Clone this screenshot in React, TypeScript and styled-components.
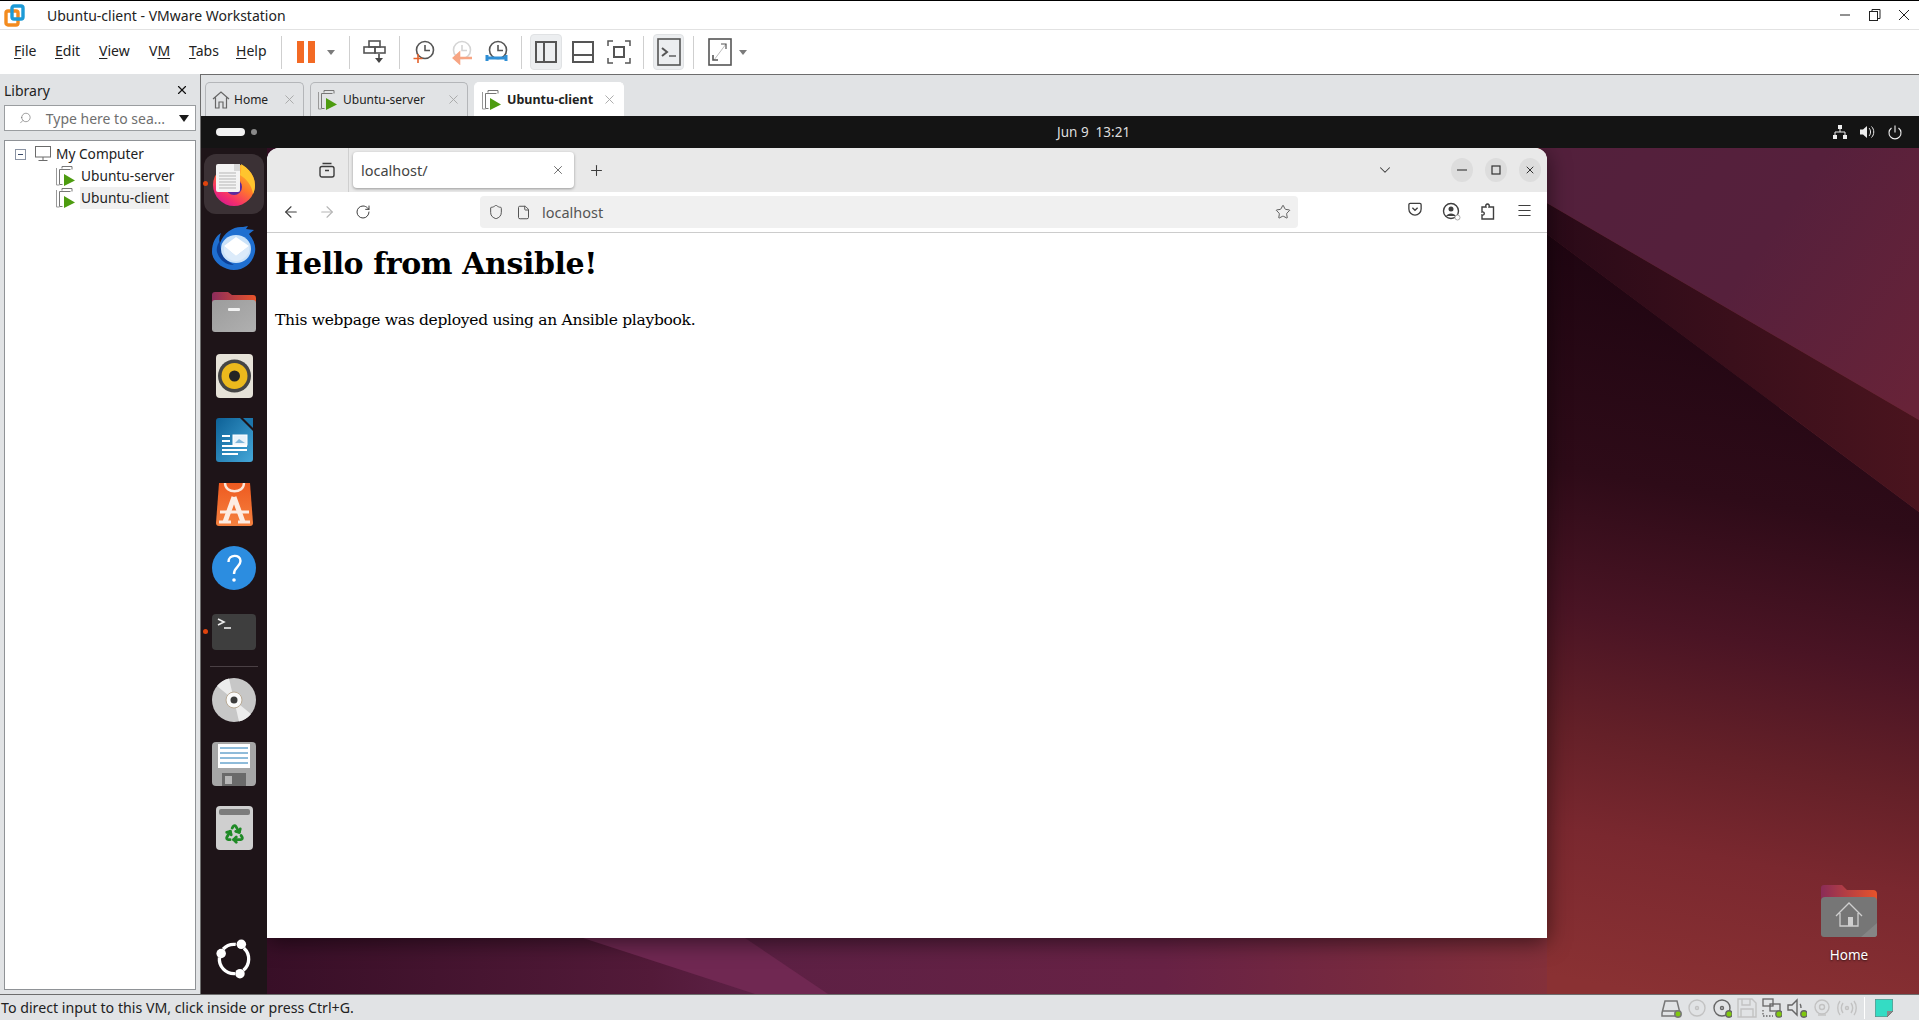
import React from "react";
import styled, { createGlobalStyle } from "styled-components";
import {
  ArrowLeft,
  ArrowRight,
  ChevronDown,
  File,
  Menu,
  Plus,
  Recycle,
  RotateCw,
  Search,
  Shield,
  Star,
  X,
} from "lucide-react";

const GlobalStyle = createGlobalStyle`
  html, body { margin: 0; padding: 0; background: #e1e3e5; overflow: hidden; }
  body { font-family: "Noto Sans", "Open Sans", sans-serif; }
`;

const Shell = styled.div`
  width: 1919px;
  height: 1020px;
  display: flex;
  flex-direction: column;
  background: #e1e3e5;
  color: #1a1a1a;
`;

const TitleBar = styled.div`
  height: 30px;
  box-sizing: border-box;
  display: flex;
  align-items: center;
  background: #fff;
  border-top: 1px solid #000;
  border-bottom: 1px solid #e2e2e2;
  padding-left: 4px;
`;

const TitleText = styled.span`
  margin-left: 21px;
  font-size: 14px;
  color: #222;
  flex: 1;
`;

const WinControl = styled.div`
  width: 29.5px;
  display: flex;
  justify-content: center;
`;

const ToolBar = styled.div`
  height: 44px;
  display: flex;
  align-items: center;
  background: #fff;
`;

const MenuItem = styled.div<{ $w: number }>`
  width: ${(p) => p.$w}px;
  font-size: 14px;
  color: #222;
  u { text-underline-offset: 2px; }
`;

const MenuRow = styled.div`
  display: flex;
  padding-left: 14px;
  margin-bottom: 3px;
`;

const Sep = styled.div`
  width: 1px;
  height: 33px;
  background: #cfcfcf;
`;

const ToolCell = styled.div<{ $w: number; $active?: boolean; $gap?: number }>`
  width: ${(p) => p.$w}px;
  height: 36px;
  box-sizing: border-box;
  display: flex;
  align-items: center;
  justify-content: center;
  gap: ${(p) => p.$gap ?? 11}px;
  border-radius: 4px;
  background: ${(p) => (p.$active ? "#eceef0" : "transparent")};
  border: 1px solid ${(p) => (p.$active ? "#e0e2e4" : "transparent")};
`;

const ToolPad = styled.div<{ $w: number }>`
  width: ${(p) => p.$w}px;
`;

const Caret = styled.div`
  width: 0;
  height: 0;
  border-left: 4.5px solid transparent;
  border-right: 4.5px solid transparent;
  border-top: 5px solid #7b7b7b;
`;

const Main = styled.div`
  flex: 1;
  display: flex;
  min-height: 0;
`;

const Library = styled.div`
  width: 200px;
  box-sizing: border-box;
  padding: 0 4px 4px;
  display: flex;
  flex-direction: column;
`;

const LibraryHead = styled.div`
  height: 31px;
  box-sizing: border-box;
  padding: 1px 7px 0 0;
  display: flex;
  align-items: center;
  justify-content: space-between;
  font-size: 14px;
  color: #222;
`;

const SearchBox = styled.div`
  height: 26px;
  box-sizing: border-box;
  border: 1px solid #9a9da0;
  background: #fff;
  display: flex;
  align-items: center;
  padding-left: 14px;
  font-size: 14px;
  color: #6f6f6f;
  gap: 14px;
`;

const SearchText = styled.span`
  flex: 1;
  white-space: nowrap;
`;

const SearchGlyph = styled(Search)`
  transform: scaleX(-1);
`;

const BlackCaret = styled.div`
  width: 0;
  height: 0;
  margin-right: 6px;
  border-left: 5.5px solid transparent;
  border-right: 5.5px solid transparent;
  border-top: 7px solid #1a1a1a;
`;

const Tree = styled.div`
  flex: 1;
  margin-top: 9px;
  box-sizing: border-box;
  border: 1px solid #8f9296;
  background: #fff;
  padding-top: 2px;
`;

const TreeRow = styled.div<{ $indent: number }>`
  height: 22px;
  display: flex;
  align-items: center;
  padding-left: ${(p) => p.$indent}px;
  font-size: 13.7px;
  color: #222;
`;

const TreeLabel = styled.span<{ $selected?: boolean }>`
  margin-left: 3px;
  padding: 0 1px;
  line-height: 22px;
  background: ${(p) => (p.$selected ? "#f0f0f0" : "transparent")};
`;

const ExpandBox = styled.div`
  width: 9px;
  height: 9px;
  margin-right: 8px;
  border: 1px solid #8a93a3;
  display: flex;
  align-items: center;
  justify-content: center;
  &::after {
    content: "";
    width: 5px;
    height: 1px;
    background: #3a4a6a;
  }
`;

const VmArea = styled.div`
  flex: 1;
  display: flex;
  flex-direction: column;
  border-left: 1px solid #6d6d6d;
  border-top: 1px solid #6d6d6d;
  min-width: 0;
`;

const TabStrip = styled.div`
  height: 41px;
  display: flex;
  align-items: flex-end;
  gap: 6px;
  padding-left: 4px;
  background: #e1e3e5;
`;

const VmTab = styled.div<{ $w: number; $active?: boolean }>`
  width: ${(p) => p.$w}px;
  height: 34px;
  box-sizing: border-box;
  display: flex;
  align-items: center;
  padding-left: 6px;
  border: 1px solid ${(p) => (p.$active ? "#fff" : "#b4b6b9")};
  border-bottom: none;
  border-radius: 5px 5px 0 0;
  background: ${(p) => (p.$active ? "#fff" : "#e1e3e5")};
  font-size: ${(p) => (p.$active ? 12.5 : 12)}px;
  font-weight: ${(p) => (p.$active ? 700 : 400)};
  color: #222;
`;

const VmTabLabel = styled.span`
  margin-left: 4px;
  flex: 1;
  white-space: nowrap;
`;

const VmTabClose = styled.div`
  margin-right: 6px;
  display: flex;
  color: #a8a8a8;
`;

const GuestBar = styled.div`
  height: 32px;
  display: flex;
  align-items: center;
  background: #141414;
  color: #dedede;
  font-size: 13.5px;
  padding: 0 17px 0 15px;
`;

const ActivityPill = styled.div`
  width: 29px;
  height: 8px;
  border-radius: 4px;
  background: #f2f2f2;
`;

const ActivityDot = styled.div`
  width: 6px;
  height: 6px;
  margin-left: 6px;
  border-radius: 50%;
  background: #8a8a8a;
`;

const Clock = styled.span`
  margin-left: 800px;
  white-space: pre;
  flex: 1;
`;

const TrayIcons = styled.div`
  display: flex;
  align-items: center;
  gap: 13px;
`;

const GuestBody = styled.div`
  flex: 1;
  display: flex;
  min-height: 0;
`;

const Dock = styled.div`
  width: 66px;
  flex: none;
  display: flex;
  flex-direction: column;
  align-items: center;
  box-sizing: border-box;
  padding: 4px 0 3px;
  background: #1e1418;
`;

const DockCell = styled.div<{ $active?: boolean; $running?: boolean }>`
  position: relative;
  width: 60px;
  height: 60px;
  margin: 2px 0;
  display: flex;
  align-items: center;
  justify-content: center;
  border-radius: 12px;
  background: ${(p) => (p.$active ? "#3b3135" : "transparent")};
  &::before {
    content: "";
    display: ${(p) => (p.$running ? "block" : "none")};
    position: absolute;
    left: -1px;
    top: 27px;
    width: 5px;
    height: 5px;
    border-radius: 50%;
    background: #e0440e;
  }
`;

const DockDivider = styled.div`
  width: 48px;
  height: 1px;
  margin: 2px 0 1px;
  background: #4a4044;
`;

const DockSpacer = styled.div`
  flex: 1;
`;

const Desktop = styled.div`
  position: relative;
  flex: 1;
  overflow: hidden;
`;

const Wallpaper = styled.svg`
  position: absolute;
  inset: 0;
  width: 100%;
  height: 100%;
`;

const BrowserWindow = styled.div`
  position: absolute;
  left: 0;
  top: 0;
  width: 1280px;
  height: 790px;
  display: flex;
  flex-direction: column;
  background: #fff;
  border-radius: 12px 12px 0 0;
  overflow: hidden;
  box-shadow: 0 4px 22px rgba(0, 0, 0, 0.55);
`;

const BrowserTabs = styled.div`
  height: 44px;
  flex: none;
  display: flex;
  align-items: center;
  background: #e9e9e9;
  color: #3c3c3c;
`;

const ViewButton = styled.div`
  width: 82px;
  height: 44px;
  box-sizing: border-box;
  padding-left: 52px;
  display: flex;
  align-items: center;
  border-right: 1px solid #cfcfcf;
`;

const BrowserTab = styled.div`
  width: 221px;
  height: 36px;
  margin-left: 4px;
  box-sizing: border-box;
  display: flex;
  align-items: center;
  justify-content: space-between;
  padding: 0 9px 0 8px;
  background: #fff;
  border-radius: 4px;
  box-shadow: 0 1px 3px rgba(0, 0, 0, 0.35);
  font-size: 14.5px;
  color: #444;
`;

const NewTab = styled.div`
  margin-left: 14px;
  display: flex;
  flex: 1;
`;

const RoundControl = styled.div<{ $last?: boolean }>`
  width: 22px;
  height: 24px;
  margin-left: 12px;
  margin-right: ${(p) => (p.$last ? 6 : 0)}px;
  border-radius: 50%;
  background: #dddddd;
  display: flex;
  align-items: center;
  justify-content: center;
`;

const TabChevron = styled.div`
  margin-right: 45px;
  display: flex;
`;

const NavBar = styled.div`
  height: 41px;
  flex: none;
  box-sizing: border-box;
  display: flex;
  align-items: center;
  border-bottom: 1px solid #cccccc;
  color: #3f3f3f;
  padding-left: 6px;
`;

const NavButton = styled.div<{ $muted?: boolean }>`
  width: 36px;
  display: flex;
  justify-content: center;
  color: ${(p) => (p.$muted ? "#b5b5b5" : "#3f3f3f")};
`;

const UrlBar = styled.div`
  width: 818px;
  height: 32px;
  margin-left: 99px;
  box-sizing: border-box;
  display: flex;
  align-items: center;
  padding: 0 7px 0 8px;
  gap: 12px;
  border-radius: 4px;
  background: #f0f0f0;
  font-size: 14.5px;
  color: #555;
`;

const UrlText = styled.span`
  flex: 1;
  margin-left: -1px;
`;

const NavTools = styled.div`
  display: flex;
  margin-left: 99px;
`;

const NavTool = styled.div`
  width: 36.5px;
  display: flex;
  justify-content: center;
`;

const Page = styled.div`
  flex: 1;
  padding: 0 8px;
  color: #000;
  font-family: "DejaVu Serif", "Liberation Serif", serif;
`;

const Heading = styled.h1`
  margin: 11px 0 0;
  font-size: 30px;
  letter-spacing: -0.4px;
  line-height: 40px;
  font-weight: 700;
`;

const Paragraph = styled.p`
  margin: 24px 0 0;
  font-size: 15.5px;
  letter-spacing: -0.3px;
  line-height: 24px;
`;

const HomeIcon = styled.div`
  position: absolute;
  left: 1527px;
  top: 737px;
  width: 110px;
  display: flex;
  flex-direction: column;
  align-items: center;
  color: #fff;
  font-size: 13.5px;
  text-shadow: 0 1px 2px rgba(0, 0, 0, 0.6);
`;

const HomeLabel = styled.span`
  margin-top: 9px;
`;

const StatusBar = styled.div`
  height: 26px;
  flex: none;
  box-sizing: border-box;
  display: flex;
  align-items: center;
  border-top: 1px solid #6d6d6d;
  background: #e1e3e5;
  font-size: 14.2px;
  padding-left: 1px;
  color: #222;
`;

const StatusText = styled.span`
  flex: 1;
`;

const StatusIcons = styled.div`
  display: flex;
  align-items: center;
  padding-right: 26px;
`;

const StatusCell = styled.div`
  width: 25px;
  display: flex;
  justify-content: center;
`;

const StatusSep = styled.div`
  width: 1px;
  height: 22px;
  margin: 0 10px 0 5px;
  background: #fff;
`;

const VmwareLogo = () => (
  <svg width="22" height="26" viewBox="0 0 22 26">
    <rect x="2" y="9" width="12" height="14" rx="2" fill="none" stroke="#f38b1e" strokeWidth="3.4" />
    <rect x="8" y="4" width="11" height="13" rx="2" fill="none" stroke="#1c9ad6" strokeWidth="3.4" />
  </svg>
);

const Minimize = () => (
  <svg width="12" height="12"><path d="M1 6h10" stroke="#222" /></svg>
);
const Restore = () => (
  <svg width="14" height="14" fill="none" stroke="#222">
    <rect x="1.5" y="3.5" width="8" height="9" />
    <path d="M4 3.5V1.5h8v9h-2.5" />
  </svg>
);
const CloseX = () => (
  <svg width="12" height="12" stroke="#222"><path d="M1 1l10 10M11 1L1 11" /></svg>
);

const PauseIcon = () => (
  <svg width="18" height="22">
    <rect width="7" height="22" fill="#f36a24" />
    <rect x="11" width="7" height="22" fill="#f36a24" />
  </svg>
);

const SendKeysIcon = () => (
  <svg width="24" height="24" fill="none" stroke="#555" strokeWidth="1.6">
    <rect x="6" y="1" width="11" height="6" />
    <rect x="1" y="7" width="11" height="6" />
    <rect x="12" y="7" width="10" height="6" />
    <path d="M16 14v5" stroke="#444" />
    <path d="M12 18h8l-4 5z" fill="#444" stroke="none" />
  </svg>
);

const SnapshotIcon = ({ kind }: { kind: "take" | "revert" | "manage" }) => {
  const faded = kind === "revert";
  return (
    <svg width="24" height="26" fill="none">
      <circle cx="13" cy="11" r="8.5" stroke={faded ? "#d4d4d4" : "#555"} strokeWidth="1.6" />
      <path d="M13 6v5.5h5" stroke={faded ? "#d4d4d4" : "#555"} strokeWidth="1.6" />
      {kind === "take" && <path d="M6 15v9M1.5 19.5h9" stroke="#e4632c" strokeWidth="1.6" />}
      {kind === "revert" && <path d="M23 19H6M10 14.5L5 19l5 4.5z" stroke="#f7a583" strokeWidth="2.6" />}
      {kind === "manage" && <path d="M2 19h19M2 16v6M21 16v6" stroke="#2f8fd6" strokeWidth="3" />}
    </svg>
  );
};

const PanelIcon = ({ kind }: { kind: "side" | "bottom" | "full" }) => (
  <svg width="24" height="24" fill="none" stroke="#555" strokeWidth="2">
    {kind === "side" && (
      <>
        <rect x="2" y="2" width="20" height="20" />
        <path d="M10 2v20" />
      </>
    )}
    {kind === "bottom" && (
      <>
        <rect x="2" y="2" width="20" height="20" />
        <path d="M2 15h20" />
      </>
    )}
    {kind === "full" && (
      <>
        <rect x="7" y="7" width="10" height="10" />
        <path d="M1 6V1h5M18 1h5v5M23 18v5h-5M6 23H1v-5" strokeWidth="1.5" />
      </>
    )}
  </svg>
);

const ConsoleIcon = () => (
  <svg width="24" height="28" fill="none" stroke="#555">
    <rect x="1" y="1" width="22" height="26" strokeWidth="1.6" />
    <path d="M5 10l5 4-5 4" strokeWidth="2" />
    <path d="M12 18h7" strokeWidth="1.4" />
  </svg>
);

const StretchIcon = () => (
  <svg width="24" height="28" fill="none" stroke="#555">
    <rect x="1" y="1" width="22" height="26" strokeWidth="1.6" />
    <path d="M6 22L18 6" stroke="#bcbcbc" />
    <path d="M13 6h5v5" strokeWidth="1.2" />
    <path d="M5 17v5h5" strokeWidth="1.6" />
  </svg>
);

const VmGlyph = () => (
  <svg width="22" height="22" fill="none">
    <path d="M7 3.5V1.5h10v3M4.5 4.5h11M4.5 4.5v15h3" stroke="#777" />
    <path d="M1.5 3v17h3" stroke="#999" />
    <path d="M9 9l11 6.5L9 21z" fill="#4d9c10" />
  </svg>
);

const MonitorGlyph = () => (
  <svg width="18" height="18" fill="none" stroke="#6b6b6b">
    <rect x="1.5" y="1.5" width="15" height="10.5" />
    <path d="M9 12v3M4.5 15.5h9" />
  </svg>
);

const HomeGlyph = () => (
  <svg width="18" height="20" fill="none" stroke="#666" strokeWidth="1.2">
    <path d="M1 9l8-7 8 7M3.5 7.5V18h3.5v-6h4v6h3.5V7.5" />
  </svg>
);

const FirefoxDock = () => (
  <svg width="48" height="48" viewBox="0 0 48 48">
    <defs>
      <linearGradient id="ffBody" x1="0.9" y1="0.1" x2="0.3" y2="1">
        <stop offset="0" stopColor="#ffc22f" />
        <stop offset="0.45" stopColor="#ff7a2a" />
        <stop offset="0.8" stopColor="#f5306a" />
        <stop offset="1" stopColor="#d81c8c" />
      </linearGradient>
    </defs>
    <circle cx="24" cy="25" r="21" fill="url(#ffBody)" />
    <path d="M31 4c5 3 13 9 14 21 0 4-1 7-2 9-1-8-6-15-13-19 1-4 2-7 1-11z" fill="#ffc52e" />
    <circle cx="24" cy="27" r="8" fill="#5b2a9e" />
    <rect x="6" y="4" width="24" height="28" rx="2" fill="#f4f4f4" />
    <path d="M24 4h6v7h-6z" fill="#d8d8d8" />
    <path d="M9 13h17M9 16h17M9 19h17M9 22h17M9 25h17M9 28h17" stroke="#b5b5b5" />
  </svg>
);

const ThunderbirdDock = () => (
  <svg width="48" height="48" viewBox="0 0 48 48">
    <path d="M2 28C2 18 6 12 11 9c-2 5-2 8-1 10C14 8 24 2 33 3l5-1-2 3 8 1-5 4c5 6 7 12 6 18-2 11-11 18-21 18S2 38 2 28z" fill="#1f6fd0" />
    <path d="M7 28c-1-4 1-9 3-11 0 8 2 18 14 24-9 0-15-6-17-13z" fill="#0c3f96" />
    <ellipse cx="26" cy="25" rx="15" ry="14" fill="#cbe2f8" />
    <path d="M14 22l12-9 13 9-13 10z" fill="#ffffff" />
    <path d="M14 22l12 10 13-10v6c-3 6-8 9-13 9s-10-3-12-9z" fill="#dcebfa" />
  </svg>
);

const FilesDock = () => (
  <svg width="48" height="48" viewBox="0 0 48 48">
    <defs>
      <linearGradient id="folderBack" x1="0" y1="0" x2="1" y2="0">
        <stop offset="0" stopColor="#8c2c5c" />
        <stop offset="1" stopColor="#e8542a" />
      </linearGradient>
      <linearGradient id="folderFront" x1="0" y1="0" x2="1" y2="1">
        <stop offset="0" stopColor="#9c9c9c" />
        <stop offset="1" stopColor="#b0b0b0" />
      </linearGradient>
    </defs>
    <path d="M2 7a3 3 0 013-3h13l4 3h21a3 3 0 013 3v10H2z" fill="url(#folderBack)" />
    <rect x="2" y="12" width="44" height="32" rx="3" fill="url(#folderFront)" />
    <rect x="18" y="20" width="12" height="3" rx="1" fill="#f2f2f2" />
  </svg>
);

const RhythmboxDock = () => (
  <svg width="48" height="48" viewBox="0 0 48 48">
    <rect x="6" y="2" width="37" height="44" rx="4" fill="#e6e2d8" />
    <circle cx="24.5" cy="24" r="16.5" fill="#454545" />
    <circle cx="24.5" cy="24" r="13" fill="#ecb91d" />
    <circle cx="24.5" cy="24" r="5.5" fill="#242424" />
  </svg>
);

const WriterDock = () => (
  <svg width="48" height="48" viewBox="0 0 48 48">
    <defs>
      <linearGradient id="writerBg" x1="0" y1="0" x2="1" y2="1">
        <stop offset="0" stopColor="#0d6197" />
        <stop offset="1" stopColor="#45a7d8" />
      </linearGradient>
    </defs>
    <path d="M9 2h21l13 13v28a3 3 0 01-3 3H9a3 3 0 01-3-3V5a3 3 0 013-3z" fill="url(#writerBg)" />
    <path d="M33 2l10 10V2z" fill="#1c76ac" />
    <rect x="23" y="19" width="14" height="10" fill="#e9f3fa" stroke="#fff" />
    <path d="M25 27l4-4 3 2 3 2z" fill="#7fb6da" />
    <path d="M12 19h8v2h-8zM12 24h8v2h-8zM12 29h25v2H12zM12 33h25v2H12zM12 37h16v2H12z" fill="#fff" />
  </svg>
);

const AppCenterDock = () => (
  <svg width="48" height="48" viewBox="0 0 48 48">
    <defs>
      <linearGradient id="bag" x1="0" y1="0" x2="0" y2="1">
        <stop offset="0" stopColor="#ee5a20" />
        <stop offset="1" stopColor="#f5813f" />
      </linearGradient>
    </defs>
    <path d="M9 3h31l3 40a3 3 0 01-3 3H9a3 3 0 01-3-3z" fill="url(#bag)" />
    <path d="M15 3c0 11 19 11 19 0" fill="none" stroke="#fde7da" strokeWidth="2.4" />
    <path d="M24 17l-9 25M24 17l9 25" stroke="#fdece2" strokeWidth="5" fill="none" />
    <path d="M10 32h29M9 42h12M28 42h12" stroke="#fdece2" strokeWidth="3" />
  </svg>
);

const HelpDock = () => (
  <svg width="48" height="48" viewBox="0 0 48 48">
    <circle cx="24" cy="24" r="22" fill="#2c8de0" />
    <path d="M18.5 18c0-8 12-8 12-1 0 6-6.500 6-6.500 13" fill="none" stroke="#fff" strokeWidth="2.4" />
    <circle cx="24" cy="36" r="1.8" fill="#fff" />
  </svg>
);

const TerminalDock = () => (
  <svg width="48" height="48" viewBox="0 0 48 48">
    <rect x="2" y="6" width="44" height="36" rx="4" fill="#3e3e3e" />
    <path d="M8 11l6 3-6 3" fill="none" stroke="#eee" strokeWidth="1.6" />
    <path d="M14 20h7" stroke="#eee" strokeWidth="1.6" />
  </svg>
);

const DiscDock = () => (
  <svg width="48" height="48" viewBox="0 0 48 48">
    <circle cx="24" cy="24" r="22" fill="#c7c7c7" />
    <path d="M24 24L7 10A22 22 0 0119 2.5zM24 24l17 14a22 22 0 01-12 7.500z" fill="#ececec" />
    <circle cx="24" cy="24" r="8" fill="#fafafa" stroke="#b9aa95" />
    <circle cx="24" cy="24" r="3.5" fill="#3c3c3c" />
  </svg>
);

const FloppyDock = () => (
  <svg width="48" height="48" viewBox="0 0 48 48">
    <rect x="2" y="2" width="44" height="44" rx="4" fill="#a6a6a6" />
    <rect x="8" y="4" width="32" height="24" fill="#fff" />
    <path d="M10 8h28M10 13h28M10 18h28M10 23h28" stroke="#1f78b4" />
    <rect x="12" y="33" width="24" height="13" fill="#6a6a6a" />
    <rect x="15" y="36" width="7" height="8" fill="#b8b8b8" />
  </svg>
);

const TrashDock = () => (
  <svg width="48" height="48" viewBox="0 0 48 48">
    <rect x="6" y="2" width="37" height="44" rx="4" fill="#cfcfcf" />
    <rect x="9" y="5" width="31" height="6" rx="2" fill="#7c7c7c" />
    <Recycle x="14" y="19" width="21" height="21" color="#1f8a26" strokeWidth={3.2} />
  </svg>
);

const UbuntuDock = () => (
  <svg width="44" height="44" viewBox="0 0 48 48">
    <path
      d="M34.9 12.3A16 16 0 0134.3 36.3M25.1 40A16 16 0 018.100 22.3M12.1 13.3A16 16 0 0125.9 8.100"
      fill="none"
      stroke="#fff"
      strokeWidth="3.6"
    />
    <circle cx="32" cy="8" r="5.2" fill="#fff" />
    <circle cx="10" cy="18" r="5.2" fill="#fff" />
    <circle cx="30.5" cy="40" r="5.2" fill="#fff" />
  </svg>
);

const NetworkTray = () => (
  <svg width="14" height="14" fill="#eee">
    <rect x="5" y="0" width="4" height="4" />
    <rect x="0" y="10" width="4" height="4" />
    <rect x="10" y="10" width="4" height="4" />
    <path d="M7 4v3M2 10V7h10v3" fill="none" stroke="#eee" />
  </svg>
);

const VolumeTray = () => (
  <svg width="15" height="14" fill="none" stroke="#eee">
    <path d="M0 4.500h3L7 1v12L3 9.500H0z" fill="#eee" stroke="none" />
    <path d="M9 3c2 2 2 6 0 8M11.500 1.500c3 3 3 8 0 11" />
  </svg>
);

const PowerTray = () => (
  <svg width="14" height="15" fill="none" stroke="#eee" strokeWidth="1.1">
    <path d="M7 0.5v7" />
    <path d="M3.5 3a6 6 0 107 0" />
  </svg>
);

const FirefoxViewIcon = () => (
  <svg width="16" height="16" fill="none" stroke="#3c3c3c" strokeWidth="1.4">
    <rect x="1" y="4.5" width="14" height="10.5" rx="2" />
    <path d="M3.5 1.5h9M6 8.5h4" />
  </svg>
);

const PocketIcon = () => (
  <svg width="14" height="14" viewBox="0 0 16 16" fill="none" stroke="#3f3f3f" strokeWidth="1.5">
    <path d="M2.500 1.500h11a1.500 1.500 0 011.500 1.500v5a7 7 0 01-14 0V3a1.500 1.500 0 011.500-1.500z" />
    <path d="M5 6.500L8 9.500l3-3" />
  </svg>
);

const AccountIcon = () => (
  <svg width="20" height="20" fill="none" stroke="#3f3f3f" strokeWidth="1.4">
    <circle cx="9" cy="9" r="7.500" />
    <circle cx="9" cy="7" r="2.500" fill="#3f3f3f" stroke="none" />
    <path d="M4 14c2-3.500 8-3.500 10 0z" fill="#3f3f3f" stroke="none" />
    <circle cx="15.500" cy="15.500" r="2.500" fill="#fff" stroke="#aaa" strokeWidth="1" />
  </svg>
);

const ExtensionIcon = () => (
  <svg width="16" height="18" fill="none" stroke="#3f3f3f" strokeWidth="1.4">
    <path d="M2 5h4c-1.500-4 4.500-4 3 0h4.500v12H2v-4c3 1 3-4 0-3z" />
  </svg>
);

const DocIcon = () => <File size={15} strokeWidth={1.6} />;

const HomeFolder = () => (
  <svg width="56" height="52" viewBox="0 0 56 52">
    <defs>
      <linearGradient id="homeBack" x1="0" y1="0" x2="1" y2="0">
        <stop offset="0" stopColor="#8a2c58" />
        <stop offset="1" stopColor="#e8542a" />
      </linearGradient>
    </defs>
    <path d="M0 3a3 3 0 013-3h18l5 5h26a4 4 0 014 4v12H0z" fill="url(#homeBack)" />
    <path d="M0 16a4 4 0 014-4h48a4 4 0 014 4v33a3 3 0 01-3 3H3a3 3 0 01-3-3z" fill="#767676" />
    <path d="M40 52l16-14v11a3 3 0 01-3 3z" fill="#858585" />
    <path d="M15 31l13-13 13 13M19 28v13h18V28" fill="none" stroke="#cfcfcf" strokeWidth="1.3" />
    <rect x="27" y="32" width="5" height="9" fill="#cfcfcf" />
  </svg>
);

const dot = <circle cx="17" cy="16" r="3.2" fill="#7fc80e" />;

const HddStatus = () => (
  <svg width="22" height="20" fill="none" stroke="#777" strokeWidth="1.5">
    <path d="M1 15l3-12h12l3 12v3H1zM1 13h18" />
    {dot}
  </svg>
);
const DiscStatus = ({ active }: { active?: boolean }) => (
  <svg width="20" height="20" fill="none" stroke={active ? "#666" : "#c2c2c2"} strokeWidth="1.4">
    <circle cx="10" cy="10" r="8" />
    <circle cx="10" cy="10" r="1.500" />
    {active && dot}
  </svg>
);
const FloppyStatus = () => (
  <svg width="20" height="20" fill="none" stroke="#c2c2c2" strokeWidth="1.4">
    <path d="M1 1h14l4 4v14H1zM5 1v6h8V1M4 19v-8h12v8" />
  </svg>
);
const NetStatus = () => (
  <svg width="20" height="20" fill="none" stroke="#666" strokeWidth="1.3">
    <rect x="1" y="1" width="10" height="7" />
    <rect x="8" y="6" width="10" height="7" />
    <path d="M1 12v6h10" strokeDasharray="1.5 1.5" />
    {dot}
  </svg>
);
const SoundStatus = () => (
  <svg width="20" height="20" fill="none" stroke="#666" strokeWidth="1.4">
    <path d="M1 7h4l5-5v15l-5-5H1z" />
    <path d="M13 6c1 1 1 3 1 4" />
    {dot}
  </svg>
);
const CamStatus = () => (
  <svg width="18" height="20" fill="none" stroke="#c2c2c2" strokeWidth="1.4">
    <circle cx="9" cy="9" r="7" />
    <circle cx="9" cy="9" r="2.500" />
    <path d="M5 17h8" />
  </svg>
);
const RadioStatus = () => (
  <svg width="22" height="20" fill="none" stroke="#c2c2c2" strokeWidth="1.4">
    <circle cx="11" cy="10" r="1.500" />
    <path d="M7 5c-2 3-2 7 0 10M15 5c2 3 2 7 0 10M4 3c-3 4-3 10 0 14M18 3c3 4 3 10 0 14" />
  </svg>
);
const NoteStatus = () => (
  <svg width="18" height="18">
    <path d="M0 0h18v12l-6 6H0z" fill="#34dcc4" />
    <path d="M18 12h-6v6z" fill="#8a8a8a" />
    <path d="M0 0h18v12l-6 6H0z" fill="none" stroke="#777" />
  </svg>
);

const App = () => {
  const dockTop = [
    { icon: <FirefoxDock />, active: true, running: true },
    { icon: <ThunderbirdDock /> },
    { icon: <FilesDock /> },
    { icon: <RhythmboxDock /> },
    { icon: <WriterDock /> },
    { icon: <AppCenterDock /> },
    { icon: <HelpDock /> },
    { icon: <TerminalDock />, running: true },
  ];
  const dockBottom = [<DiscDock />, <FloppyDock />, <TrashDock />];

  return (
    <Shell>
      <GlobalStyle />
      <TitleBar>
        <VmwareLogo />
        <TitleText>Ubuntu-client - VMware Workstation</TitleText>
        <WinControl><Minimize /></WinControl>
        <WinControl><Restore /></WinControl>
        <WinControl><CloseX /></WinControl>
      </TitleBar>

      <ToolBar>
        <MenuRow>
          <MenuItem $w={41}><u>F</u>ile</MenuItem>
          <MenuItem $w={44}><u>E</u>dit</MenuItem>
          <MenuItem $w={50}><u>V</u>iew</MenuItem>
          <MenuItem $w={40}>V<u>M</u></MenuItem>
          <MenuItem $w={47}><u>T</u>abs</MenuItem>
          <MenuItem $w={45}><u>H</u>elp</MenuItem>
        </MenuRow>
        <Sep />
        <ToolCell $w={67} $gap={12}><PauseIcon /><Caret /></ToolCell>
        <Sep />
        <ToolCell $w={49}><SendKeysIcon /></ToolCell>
        <Sep />
        <ToolPad $w={6} />
        <ToolCell $w={36}><SnapshotIcon kind="take" /></ToolCell>
        <ToolCell $w={37}><SnapshotIcon kind="revert" /></ToolCell>
        <ToolCell $w={36}><SnapshotIcon kind="manage" /></ToolCell>
        <ToolPad $w={6} />
        <Sep />
        <ToolPad $w={8} />
        <ToolCell $w={32} $active><PanelIcon kind="side" /></ToolCell>
        <ToolPad $w={5} />
        <ToolCell $w={32}><PanelIcon kind="bottom" /></ToolCell>
        <ToolPad $w={4} />
        <ToolCell $w={32}><PanelIcon kind="full" /></ToolCell>
        <ToolPad $w={8} />
        <Sep />
        <ToolPad $w={9} />
        <ToolCell $w={31} $active><ConsoleIcon /></ToolCell>
        <ToolPad $w={9} />
        <Sep />
        <ToolPad $w={12} />
        <ToolCell $w={42} $gap={7}><StretchIcon /><Caret /></ToolCell>
      </ToolBar>

      <Main>
        <Library>
          <LibraryHead>
            <span>Library</span>
            <X size={14} color="#111" strokeWidth={2} />
          </LibraryHead>
          <SearchBox>
            <SearchGlyph size={16} color="#777" strokeWidth={1.3} />
            <SearchText>Type here to sea...</SearchText>
            <BlackCaret />
          </SearchBox>
          <Tree>
            <TreeRow $indent={10}>
              <ExpandBox />
              <MonitorGlyph />
              <TreeLabel>My Computer</TreeLabel>
            </TreeRow>
            <TreeRow $indent={50}>
              <VmGlyph />
              <TreeLabel>Ubuntu-server</TreeLabel>
            </TreeRow>
            <TreeRow $indent={50}>
              <VmGlyph />
              <TreeLabel $selected>Ubuntu-client</TreeLabel>
            </TreeRow>
          </Tree>
        </Library>

        <VmArea>
          <TabStrip>
            <VmTab $w={99}>
              <HomeGlyph />
              <VmTabLabel>Home</VmTabLabel>
              <VmTabClose><X size={15} strokeWidth={1.5} /></VmTabClose>
            </VmTab>
            <VmTab $w={158}>
              <VmGlyph />
              <VmTabLabel>Ubuntu-server</VmTabLabel>
              <VmTabClose><X size={15} strokeWidth={1.5} /></VmTabClose>
            </VmTab>
            <VmTab $w={150} $active>
              <VmGlyph />
              <VmTabLabel>Ubuntu-client</VmTabLabel>
              <VmTabClose><X size={15} strokeWidth={1.5} /></VmTabClose>
            </VmTab>
          </TabStrip>

          <GuestBar>
            <ActivityPill />
            <ActivityDot />
            <Clock>Jun 9  13:21</Clock>
            <TrayIcons>
              <NetworkTray />
              <VolumeTray />
              <PowerTray />
            </TrayIcons>
          </GuestBar>

          <GuestBody>
            <Dock>
              {dockTop.map((item, i) => (
                <DockCell key={i} $active={item.active} $running={item.running}>
                  {item.icon}
                </DockCell>
              ))}
              <DockDivider />
              {dockBottom.map((icon, i) => (
                <DockCell key={i}>{icon}</DockCell>
              ))}
              <DockSpacer />
              <DockCell><UbuntuDock /></DockCell>
            </Dock>

            <Desktop>
              <Wallpaper viewBox="267 148 1652 846" preserveAspectRatio="none">
                <defs>
                  <linearGradient id="wpBase" gradientUnits="userSpaceOnUse" x1="267" y1="0" x2="1547" y2="0">
                    <stop offset="0" stopColor="#380f27" />
                    <stop offset="0.3" stopColor="#531a39" />
                    <stop offset="0.37" stopColor="#5c2044" />
                    <stop offset="0.7" stopColor="#682245" />
                    <stop offset="1" stopColor="#84303a" />
                  </linearGradient>
                  <linearGradient id="wpTop" gradientUnits="userSpaceOnUse" x1="1560" y1="148" x2="1919" y2="400">
                    <stop offset="0" stopColor="#53203c" />
                    <stop offset="0.5" stopColor="#56203c" />
                    <stop offset="1" stopColor="#682338" />
                  </linearGradient>
                  <linearGradient id="wpBand" gradientUnits="userSpaceOnUse" x1="1547" y1="0" x2="1919" y2="0">
                    <stop offset="0" stopColor="#2a0a18" />
                    <stop offset="1" stopColor="#4a141e" />
                  </linearGradient>
                  <linearGradient id="wpLow" gradientUnits="userSpaceOnUse" x1="1790" y1="234" x2="1650" y2="994">
                    <stop offset="0" stopColor="#1c0410" />
                    <stop offset="0.35" stopColor="#2e0b18" />
                    <stop offset="0.53" stopColor="#4a1424" />
                    <stop offset="0.68" stopColor="#642028" />
                    <stop offset="0.81" stopColor="#7a282f" />
                    <stop offset="1" stopColor="#8a3133" />
                  </linearGradient>
                </defs>
                <rect x="267" y="148" width="1652" height="846" fill="url(#wpBase)" />
                <path d="M583 938L755 994H828L745 938z" fill="#702852" />
                <path d="M1540 148H1919V420L1540 199z" fill="url(#wpTop)" />
                <path d="M1540 199L1919 420V512L1540 229z" fill="url(#wpBand)" />
                <path d="M1547 234L1919 512V994H1547z" fill="url(#wpLow)" />
              </Wallpaper>

              <BrowserWindow>
                <BrowserTabs>
                  <ViewButton><FirefoxViewIcon /></ViewButton>
                  <BrowserTab>
                    <span>localhost/</span>
                    <X size={14} strokeWidth={1.3} />
                  </BrowserTab>
                  <NewTab><Plus size={17} strokeWidth={1.5} /></NewTab>
                  <TabChevron><ChevronDown size={18} strokeWidth={1.4} /></TabChevron>
                  <RoundControl><Minimize /></RoundControl>
                  <RoundControl>
                    <svg width="10" height="10" fill="none" stroke="#333" strokeWidth="1.2"><rect x="1" y="1" width="8" height="8" /></svg>
                  </RoundControl>
                  <RoundControl $last>
                    <X size={12} strokeWidth={2} color="#333" />
                  </RoundControl>
                </BrowserTabs>
                <NavBar>
                  <NavButton><ArrowLeft size={18} strokeWidth={1.5} /></NavButton>
                  <NavButton $muted><ArrowRight size={18} strokeWidth={1.5} /></NavButton>
                  <NavButton><RotateCw size={16} strokeWidth={1.5} /></NavButton>
                  <UrlBar>
                    <Shield size={16} strokeWidth={1.5} />
                    <DocIcon />
                    <UrlText>localhost</UrlText>
                    <Star size={16} strokeWidth={1.4} />
                  </UrlBar>
                  <NavTools>
                    <NavTool><PocketIcon /></NavTool>
                    <NavTool><AccountIcon /></NavTool>
                    <NavTool><ExtensionIcon /></NavTool>
                    <NavTool><Menu size={17} strokeWidth={1.5} /></NavTool>
                  </NavTools>
                </NavBar>
                <Page>
                  <Heading>Hello from Ansible!</Heading>
                  <Paragraph>This webpage was deployed using an Ansible playbook.</Paragraph>
                </Page>
              </BrowserWindow>

              <HomeIcon>
                <HomeFolder />
                <HomeLabel>Home</HomeLabel>
              </HomeIcon>
            </Desktop>
          </GuestBody>
        </VmArea>
      </Main>

      <StatusBar>
        <StatusText>To direct input to this VM, click inside or press Ctrl+G.</StatusText>
        <StatusIcons>
          <StatusCell><HddStatus /></StatusCell>
          <StatusCell><DiscStatus /></StatusCell>
          <StatusCell><DiscStatus active /></StatusCell>
          <StatusCell><FloppyStatus /></StatusCell>
          <StatusCell><NetStatus /></StatusCell>
          <StatusCell><SoundStatus /></StatusCell>
          <StatusCell><CamStatus /></StatusCell>
          <StatusCell><RadioStatus /></StatusCell>
          <StatusSep />
          <NoteStatus />
        </StatusIcons>
      </StatusBar>
    </Shell>
  );
};

export default App;
